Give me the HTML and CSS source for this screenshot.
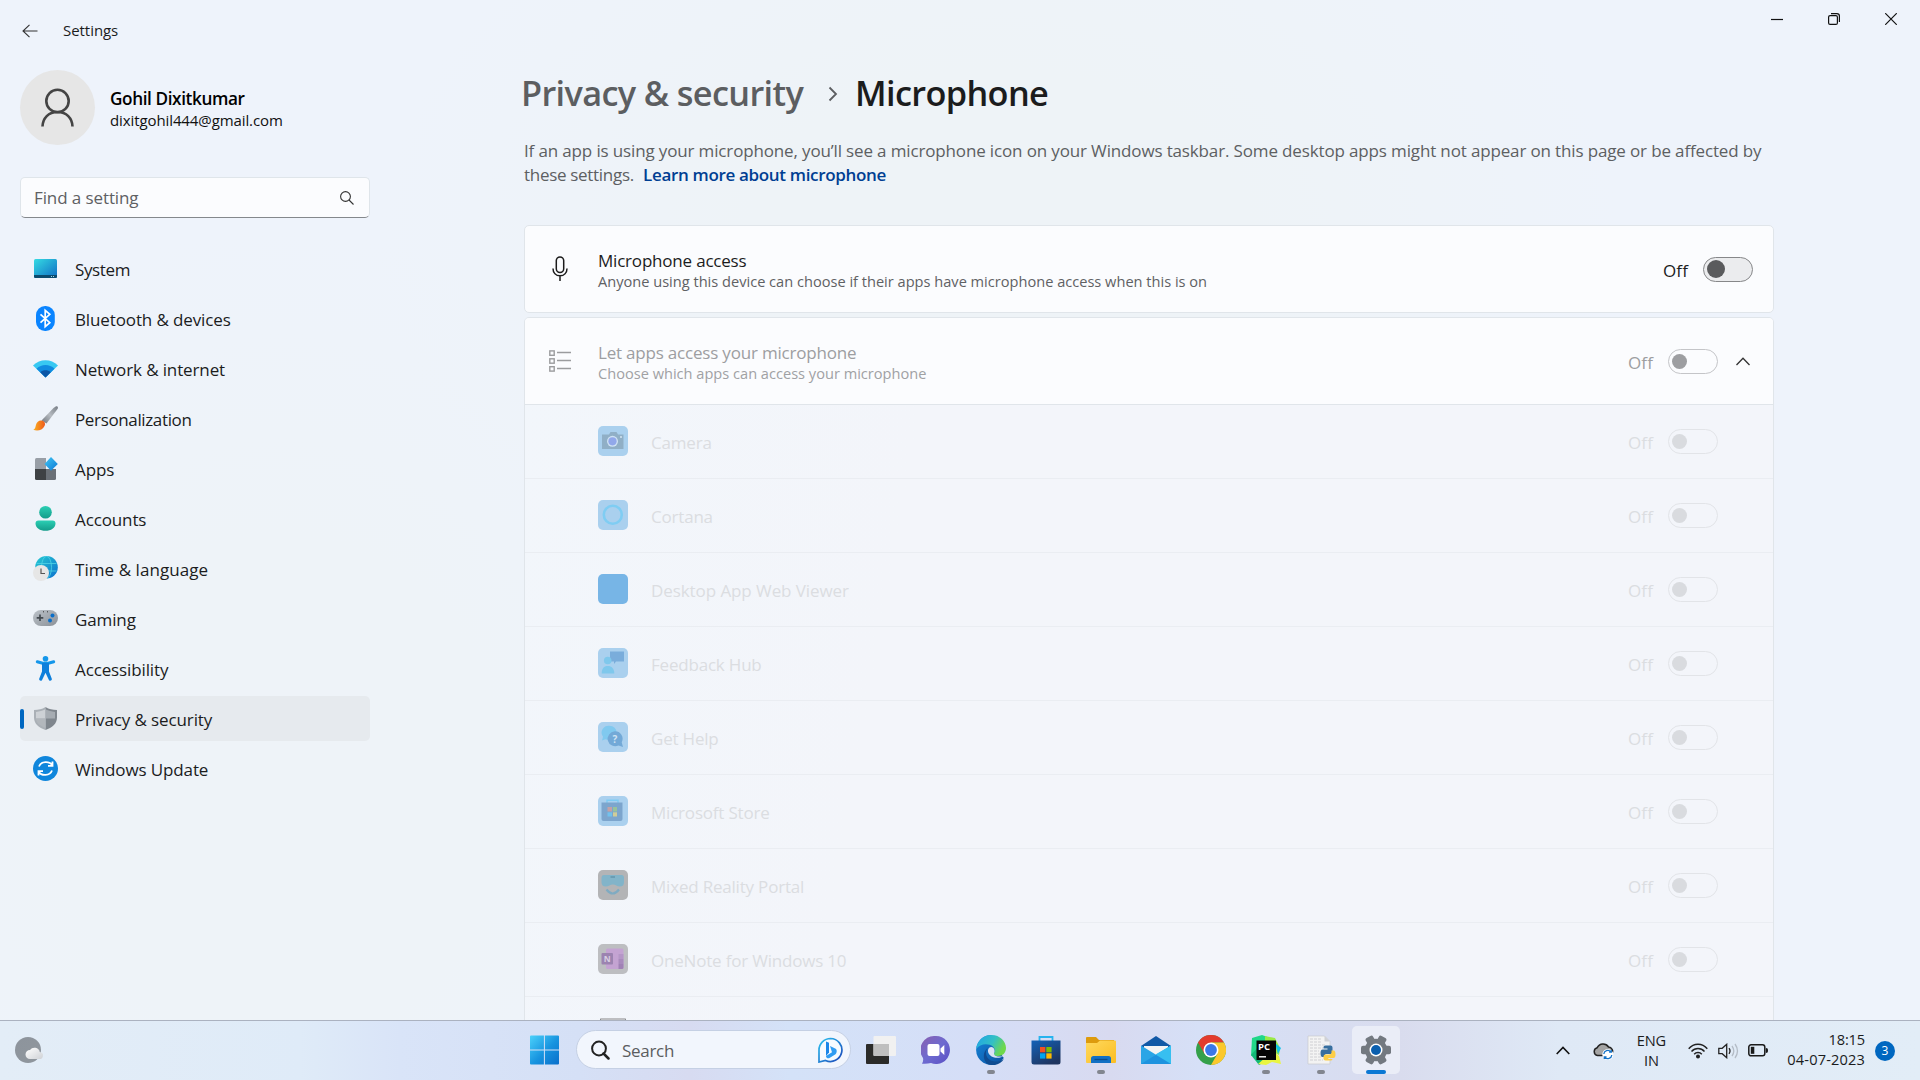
FILE: index.html
```html
<!DOCTYPE html>
<html lang="en">
<head>
<meta charset="utf-8">
<title>Settings</title>
<link rel="stylesheet" href="styles.css">
</head>
<body>
<div class="window">
  <header class="titlebar">
    <svg class="back" width="16" height="14" viewBox="0 0 16 14" fill="none" stroke="#333" stroke-width="1.1"><path d="M7.5 .8 1 7l6.500 6.200M1 7h14.500"/></svg>
    <span class="app-name">Settings</span>
    <div class="controls">
      <svg width="12" height="12" viewBox="0 0 12 12"><path d="M0 6.500h12" stroke="#111" stroke-width="1.200"/></svg>
      <svg width="12" height="12" viewBox="0 0 12 12" fill="none" stroke="#111" stroke-width="1.200"><rect x=".6" y="2.600" width="8.800" height="8.800" rx="1.500"/><path d="M3 .6h5.900a2.500 2.500 0 0 1 2.500 2.500V9"/></svg>
      <svg width="12" height="12" viewBox="0 0 12 12"><path d="M.2.2l11.600 11.600M11.800.2.2 11.800" stroke="#111" stroke-width="1.200"/></svg>
    </div>
  </header>
  <div class="body">
    <aside class="sidebar">
      <div class="profile">
        <div class="avatar"><svg width="34" height="40" viewBox="0 0 34 40" fill="none" stroke="#444" stroke-width="2.600"><circle cx="16.500" cy="13" r="11.200"/><path d="M1.500 38.500C1.800 30 7.500 24 16.500 24s14.700 6 15 14.500"/></svg></div>
        <div>
          <div class="name">Gohil Dixitkumar</div>
          <div class="mail">dixitgohil444@gmail.com</div>
        </div>
      </div>
      <div class="find"><span>Find a setting</span><svg width="14" height="14" viewBox="0 0 14 14" fill="none" stroke="#333" stroke-width="1.100"><circle cx="5.500" cy="5.500" r="4.900"/><path d="M9 9l4.500 4.500"/></svg></div>
      <nav class="nav">
        <a class="item tight"><svg viewBox="0 0 25 25"><defs><linearGradient id="sy" x2="1" y2="1"><stop stop-color="#35dbe3"/><stop offset="1" stop-color="#0f6cc4"/></linearGradient></defs><rect x="1" y="3" width="23" height="19" rx="1.500" fill="url(#sy)"/><path d="M1 19h23v1.500a1.500 1.500 0 0 1-1.500 1.500h-20A1.500 1.500 0 0 1 1 20.500z" fill="#0b4a6e"/><path d="M18 20.500h1M20 20.500h1" stroke="#9fd8e8"/></svg><span>System</span></a>
        <a class="item"><svg viewBox="0 0 25 25"><rect x="3" width="18.800" height="25" rx="9" fill="#0a84ff"/><path d="M7.500 8.300l9.300 8.400-4.600 4V4.300l4.600 4-9.300 8.400" fill="none" stroke="#fff" stroke-width="1.700"/></svg><span>Bluetooth &amp; devices</span></a>
        <a class="item"><svg viewBox="0 0 25 25"><path d="M12.500 21.500L0 9.500C7 2.500 18 2.500 25 9.500z" fill="#38c8f2"/><path d="M12.500 21.500L3.500 12.800c5-5 13-5 18 0z" fill="#118be0"/><path d="M12.500 21.500L7.300 16.300c3-2.600 7.400-2.600 10.400 0z" fill="#0b56a6"/></svg><span>Network &amp; internet</span></a>
        <a class="item tight"><svg viewBox="0 0 25 25"><defs><linearGradient id="br" x1="1" x2="0" y2="1"><stop stop-color="#777d85"/><stop offset=".5" stop-color="#b6bbc1"/><stop offset="1" stop-color="#6e737a"/></linearGradient><linearGradient id="bp" x2="1"><stop stop-color="#fbb021"/><stop offset="1" stop-color="#ee5a1c"/></linearGradient></defs><path d="M23 .3c1.500-.5 2.600 1 1.500 2.700L13.500 17.500 8.500 14.500 20.500 2z" fill="url(#br)"/><path d="M8 14.500c3 0 5 2.300 3.500 5.500C9.500 24.500 4 25.500.3 23.800c2-1 2-2.300 2.700-5 .7-2.700 2.600-4.300 5-4.300z" fill="url(#bp)"/></svg><span>Personalization</span></a>
        <a class="item"><svg viewBox="0 0 25 25"><defs><linearGradient id="ap" x2="1" y2="1"><stop stop-color="#41c7f5"/><stop offset="1" stop-color="#0b78d4"/></linearGradient></defs><path d="M3.500 2H13v11H2V3.500A1.500 1.500 0 0 1 3.500 2z" fill="#989ea6"/><path d="M2 13h11v11H3.500A1.500 1.500 0 0 1 2 22.500z" fill="#3e4144"/><path d="M13 13h10v9.500a1.500 1.500 0 0 1-1.500 1.500H13z" fill="#6a7077"/><path d="M18 1l6.800 7-6.800 6.800L11.500 8z" fill="url(#ap)"/></svg><span>Apps</span></a>
        <a class="item"><svg viewBox="0 0 25 25"><defs><linearGradient id="ac" y2="1" x2="0"><stop stop-color="#2bcfb4"/><stop offset="1" stop-color="#149c8a"/></linearGradient></defs><circle cx="12.500" cy="6.300" r="6.300" fill="url(#ac)"/><path d="M5.500 14.500h14a3 3 0 0 1 3 3c0 4.500-4.500 7.300-10 7.300s-10-2.800-10-7.300a3 3 0 0 1 3-3z" fill="url(#ac)"/></svg><span>Accounts</span></a>
        <a class="item loose"><svg viewBox="0 0 25 25"><defs><linearGradient id="gl" x2="1" y2="1"><stop stop-color="#25cbd3"/><stop offset="1" stop-color="#0d6fcd"/></linearGradient></defs><circle cx="13.500" cy="11.300" r="11.300" fill="url(#gl)"/><g fill="none" stroke="#4fd3e4" stroke-width=".8"><ellipse cx="13.500" cy="11.300" rx="5" ry="11"/><path d="M3.500 7.500h20M3.500 15h20"/></g><circle cx="8" cy="17" r="8" fill="#e6e6e6"/><path d="M8 12.500v5h4" fill="none" stroke="#555" stroke-width="1.200"/></svg><span>Time &amp; language</span></a>
        <a class="item"><svg viewBox="0 0 25 25"><defs><linearGradient id="ga" x2="1" y2="1"><stop stop-color="#bcc2c9"/><stop offset="1" stop-color="#8b9198"/></linearGradient></defs><rect y="4" width="25" height="16" rx="8" fill="url(#ga)"/><path d="M7 8.500v6.500M3.700 11.800h6.600" stroke="#444a50" stroke-width="1.700"/><circle cx="19.500" cy="9.500" r="2" fill="#0b6fc9"/><circle cx="17" cy="14.500" r="2" fill="#0b6fc9"/><path d="M10 5.800h1M14 5.800h1" stroke="#333"/></svg><span>Gaming</span></a>
        <a class="item"><svg viewBox="0 0 25 25"><circle cx="12.500" cy="2.800" r="2.800" fill="#1496ea"/><path d="M4.300 5.700l5.300 1.600h5.800l5.300-1.600" fill="none" stroke="#1496ea" stroke-width="3" stroke-linecap="round"/><path d="M9 7h7v8.500l2.800 7.300c.5 1.800-2 2.700-2.900 1.100l-3.400-7.100-3.400 7.100c-.9 1.600-3.400.7-2.900-1.100L9 15.500z" fill="#0e7fdb"/></svg><span>Accessibility</span></a>
        <a class="item selected"><svg viewBox="0 0 25 25"><path d="M12.500 1C9 3.300 5.500 4 1 4v7.500C1 18 6 21.500 12.500 24z" fill="#aab0b6"/><path d="M12.500 1C16 3.300 19.500 4 24 4v7.500C24 18 19 21.500 12.500 24z" fill="#7f868d"/><path d="M12.500 3.300C9.500 5 6.500 5.700 3 5.900v6.600h9.500z" fill="#cdd1d5"/><path d="M12.500 3.300C15.500 5 18.500 5.700 22 5.900v6.600h-9.500z" fill="#a6acb2"/><path d="M3 12.500h9.500V22C6.500 19.500 3.200 17 3 12.500z" fill="#b2b7bc"/></svg><span>Privacy &amp; security</span></a>
        <a class="item"><svg viewBox="0 0 25 25"><circle cx="12.500" cy="12.500" r="12.500" fill="#0f86dc"/><g fill="none" stroke="#fff" stroke-width="1.800"><path d="M6 10.500c2-5.500 10.500-6 13.500-1M19.500 5.500v4.300h-4.500M19 14.500c-2 5.500-10.500 6-13.500 1M5.500 19.500v-4.300H10"/></g></svg><span>Windows Update</span></a>
      </nav>
    </aside>
    <main class="main">
      <h1 class="crumbs"><span class="parent">Privacy &amp; security</span><svg width="10" height="16" viewBox="0 0 10 16" fill="none" stroke="#5c5e61" stroke-width="1.800"><path d="M1.500 1.500L8 8l-6.500 6.500"/></svg><span>Microphone</span></h1>
      <p class="intro"><span class="airy">If an app is using your microphone, you’ll see a microphone icon on your Windows taskbar. Some desktop apps might not appear on this page or be affected by</span><br><span class="wide">these settings.</span> <a class="link">Learn more about microphone</a></p>
      <section class="card">
        <svg class="lead" width="22" height="26" viewBox="0 0 22 26" fill="none" stroke="#1b1b1b" stroke-width="1.500"><rect x="7.300" y=".9" width="7.400" height="15.600" rx="3.700"/><path d="M4 12.500c0 4.500 3 7.300 7 7.300s7-2.800 7-7.300M11 20v5"/></svg>
        <div class="text"><div class="title">Microphone access</div><div class="sub">Anyone using this device can choose if their apps have microphone access when this is on</div></div>
        <span class="state">Off</span><span class="toggle enabled"></span>
      </section>
      <section class="group">
        <div class="card head">
          <svg class="lead" width="22" height="22" viewBox="0 0 22 22" fill="none" stroke="#9b9c9e" stroke-width="1.400"><rect x=".8" y=".9" width="4.400" height="4.400"/><rect x=".8" y="8.800" width="4.400" height="4.400"/><rect x=".8" y="16.700" width="4.400" height="4.400"/><path d="M8 2.500h14M8 10.500h14M8 18.500h14"/></svg>
          <div class="text"><div class="title">Let apps access your microphone</div><div class="sub">Choose which apps can access your microphone</div></div>
          <span class="state">Off</span><span class="toggle"></span>
          <svg class="chev" width="14" height="9" viewBox="0 0 14 9" fill="none" stroke="#333" stroke-width="1.300"><path d="M.5 8L7 1.200 13.500 8"/></svg>
        </div>
        <div class="row"><svg viewBox="0 0 30 30"><rect width="30" height="30" rx="5" fill="#aad0ee"/><path d="M4 8.500h7l1.500-2.500h6L20 8.500h5.500V23H4z" fill="#90afc6"/><circle cx="14.500" cy="15.300" r="5.500" fill="#cfe2f4"/><circle cx="14.500" cy="15.300" r="4.100" fill="#91a8ea"/><circle cx="23" cy="11" r="1" fill="#d3e4f0"/></svg><span class="app">Camera</span><span class="state">Off</span><span class="toggle"></span></div>
        <div class="row"><svg viewBox="0 0 30 30"><rect width="30" height="30" rx="5" fill="#aad0ee"/><circle cx="14.800" cy="14.800" r="9" fill="none" stroke="#7fcdf3" stroke-width="2.600"/></svg><span class="app">Cortana</span><span class="state">Off</span><span class="toggle"></span></div>
        <div class="row"><svg viewBox="0 0 30 30"><rect width="30" height="30" rx="5" fill="#77b5e6"/></svg><span class="app airy">Desktop App Web Viewer</span><span class="state">Off</span><span class="toggle"></span></div>
        <div class="row"><svg viewBox="0 0 30 30"><rect width="30" height="30" rx="5" fill="#aad0ee"/><path d="M12 3.500h14v10h-8l-2 2.500v-2.500h-4z" fill="#7aaddb"/><circle cx="9.700" cy="12.500" r="3.800" fill="#7fc8ec"/><path d="M3.700 25.500c0-5 2-7.500 6-7.500s6.600 2.500 6.600 7.500z" fill="#7fc8ec"/></svg><span class="app">Feedback Hub</span><span class="state">Off</span><span class="toggle"></span></div>
        <div class="row"><svg viewBox="0 0 30 30"><rect width="30" height="30" rx="5" fill="#aad0ee"/><path d="M11.500 3.700a7.200 7.200 0 0 1 0 14.400c-2 0-3-.8-4-.8L4 18.500l1-3.700a7 7 0 0 1 6.500-11.100z" fill="#80c9ef"/><path d="M16.700 9.300a7.500 7.500 0 0 1 7 11L25 25l-4.500-1.500a7.500 7.500 0 1 1-3.800-14.200z" fill="#73a9d7"/><text x="17" y="21" class="glyph-q">?</text></svg><span class="app">Get Help</span><span class="state">Off</span><span class="toggle"></span></div>
        <div class="row"><svg viewBox="0 0 30 30"><rect width="30" height="30" rx="5" fill="#aad0ee"/><path d="M9 7V4.300h11V7" fill="none" stroke="#7ecbf3" stroke-width="1.400"/><path d="M3.500 6.500h21V23a2 2 0 0 1-2 2h-17a2 2 0 0 1-2-2z" fill="#7ca5cd"/><path d="M9.500 11h4.500v4.500H9.500z" fill="#c4a1a6"/><path d="M15 11h4v4.500h-4z" fill="#98c39b"/><path d="M9.500 16.300h4.500v4.200H9.500z" fill="#72c1ed"/><path d="M15 16.300h4v4.200h-4z" fill="#d0cd98"/></svg><span class="app">Microsoft Store</span><span class="state">Off</span><span class="toggle"></span></div>
        <div class="row"><svg viewBox="0 0 30 30"><rect width="30" height="30" rx="5" fill="#b3b4b6"/><path d="M6 5h17.500Q26 5 26 8v4q0 4.500-4 4.500c-3 0-4.500-2-7.200-2s-4 2-7 2q-4.300 0-4.300-4.500V8q0-3 2.500-3z" fill="#82b4c9"/><path d="M12.500 7h4.500" stroke="#6296ad" stroke-width="1.500"/><path d="M8.500 19.500q6.200 8 12.500 0" fill="none" stroke="#7fabc2" stroke-width="2.200"/></svg><span class="app">Mixed Reality Portal</span><span class="state">Off</span><span class="toggle"></span></div>
        <div class="row"><svg viewBox="0 0 30 30"><rect width="30" height="30" rx="5" fill="#bdbec1"/><rect x="8" y="4.500" width="17.500" height="20.500" rx="1.500" fill="#c4a3d2"/><path d="M20.500 10h5v5h-5z" fill="#b596c7"/><path d="M20.500 15h5v5h-5z" fill="#a98abd"/><path d="M20.500 20h5v3.500a1.500 1.500 0 0 1-1.500 1.500h-3.500z" fill="#a081b5"/><rect x="3.500" y="9" width="11.500" height="11.500" rx="1" fill="#9c83b0"/><text x="9.200" y="17.600" class="glyph-n">N</text></svg><span class="app">OneNote for Windows 10</span><span class="state">Off</span><span class="toggle"></span></div>
        <div class="row"><svg viewBox="0 0 30 30"><rect x="2" width="26" height="30" rx="2" fill="#77797c"/><rect x="3" width="24" height="30" fill="#bdbec1"/></svg></div>
      </section>
    </main>
  </div>
</div>
<footer class="taskbar">
  <svg class="weather" width="30" height="28" viewBox="0 0 30 28"><defs><linearGradient id="mo" x2="1" y2="1"><stop stop-color="#8d949c"/><stop offset="1" stop-color="#8f969d"/></linearGradient><linearGradient id="cl" x2="1" y2="1"><stop stop-color="#fff"/><stop offset="1" stop-color="#cfd2d6"/></linearGradient></defs><circle cx="14" cy="14" r="13" fill="url(#mo)"/><path d="M16 23h9a3.500 3.500 0 0 0 .8-7 5.500 5.500 0 0 0-9.800-2 4.500 4.500 0 0 0 0 9z" fill="url(#cl)"/></svg>
  <div class="apps">
    <svg class="start" width="30" height="30" viewBox="0 0 30 30"><defs><linearGradient id="wi" gradientUnits="userSpaceOnUse" x1="0" y1="0" x2="29" y2="29"><stop stop-color="#4cd2fb"/><stop offset=".55" stop-color="#1793df"/><stop offset="1" stop-color="#0a70cb"/></linearGradient></defs><path d="M1 .5h12.900v13.900H0V1.500a1 1 0 0 1 1-1zM14.900.5h13.100a1 1 0 0 1 1 1v12.900H14.900zM0 15.400h13.900v14.100H1a1 1 0 0 1-1-1zM14.900 15.400H29v13.100a1 1 0 0 1-1 1H14.900z" fill="url(#wi)"/></svg>
    <div class="search">
      <svg width="19" height="20" viewBox="0 0 19 20" fill="none" stroke="#222" stroke-width="2"><circle cx="8" cy="8.500" r="6.900"/><path d="M12.500 13.500l5 5" stroke-width="2.500" stroke-linecap="round"/></svg>
      <span>Search</span>
      <svg class="bing" width="26" height="26" viewBox="0 0 26 26"><defs><linearGradient id="bi" x2="1" y2="1"><stop stop-color="#2bc3f0"/><stop offset="1" stop-color="#1a44b8"/></linearGradient></defs><path d="M13.500 1.500a11.500 11.500 0 1 1-5 21.900L2 25V13A11.500 11.500 0 0 1 13.500 1.500z" fill="#f6fbff" stroke="url(#bi)" stroke-width="1.700"/><path d="M9 4.500l3 1.300v9.700l-3 3.500z" fill="#1b86e8"/><path d="M13 9l5.700 2.800c1.500 1 1.300 4-.2 5.500L12.500 21c-1.500.8-3.500 0-3.500-2l6-3.700z" fill="#2f9cf2"/></svg>
    </div>
    <div class="task"><svg viewBox="0 0 30 30"><rect y="9" width="23" height="20" rx="1" fill="#2b2b29"/><rect x="7.500" y="1" width="22.500" height="20" rx="1" fill="#f1f1f1"/><path d="M7.500 9H23v12H8.500a1 1 0 0 1-1-1z" fill="#bfbfbf"/></svg></div>
    <div class="task"><svg viewBox="0 0 30 30"><defs><linearGradient id="ch" x1="0" y1="0" x2="1" y2="1"><stop stop-color="#8a5fae"/><stop offset=".5" stop-color="#6e6bd0"/><stop offset="1" stop-color="#5a4fc4"/></linearGradient></defs><path d="M15 1a14 14 0 1 1-5 27.100C7 29 4 28.800 1 28.800c1-2 1.500-3.500 1-5.800A14 14 0 0 1 15 1z" fill="url(#ch)"/><rect x="6.500" y="9" width="12" height="12" rx="2" fill="#fff"/><path d="M19.500 13.500l3.800-3.500v10l-3.800-3.500z" fill="#fff"/></svg></div>
    <div class="task"><svg viewBox="0 0 30 30"><defs><linearGradient id="e1" x2="1" y2=".4"><stop stop-color="#1fa4e8"/><stop offset=".6" stop-color="#33c0c4"/><stop offset="1" stop-color="#6fd84b"/></linearGradient><linearGradient id="e2" x2="1" y2="1"><stop stop-color="#1587da"/><stop offset="1" stop-color="#0c4f9f"/></linearGradient></defs><path d="M15 0A15 15 0 1 0 27.800 23L22 15 15 0z" fill="url(#e2)"/><path d="M.2 14C1 6 7 0 15.500 0 24 0 30 6.500 30 13c0 5-3.500 8-8 8-3.500 0-5-1.200-4-2.500 1.500-2 1-5-1-7C13 8 4 8 .2 14z" fill="url(#e1)"/><path d="M12 13c-4 4-2 12.500 6.500 13.500 4 .4 7.500-.8 9.500-2.500-3 5-9 7-14 5.800C7 28 5.500 17 12 13z" fill="#0f4c92"/><path d="M13.500 12.500c-3 2.500-1.500 8 4 9.800 4 1.200 8 .2 10.500-1.300-3.500 1-9.500.8-10-2-.2-1 1-1.500.5-4-.5-2.500-3-4-5-2.500z" fill="#dbe2f5"/></svg><i></i></div>
    <div class="task"><svg viewBox="0 0 30 30"><defs><linearGradient id="st" x2=".6" y2="1"><stop stop-color="#1362b8"/><stop offset="1" stop-color="#1f3560"/></linearGradient></defs><path d="M8.500 6V2h13v4" fill="none" stroke="#27b3ee" stroke-width="1.800"/><path d="M.5 5.500h29V27a2.500 2.500 0 0 1-2.500 2.500H3A2.500 2.500 0 0 1 .5 27z" fill="url(#st)"/><path d="M9 12h5.300v5.300H9z" fill="#f25022"/><path d="M15.300 12h5.300v5.300h-5.300z" fill="#7fba00"/><path d="M9 18.300h5.300v5.300H9z" fill="#00a4ef"/><path d="M15.300 18.300h5.300v5.300h-5.300z" fill="#ffb900"/></svg></div>
    <div class="task"><svg viewBox="0 0 30 30"><defs><linearGradient id="fo" x2="1" y2="1"><stop stop-color="#ffd95e"/><stop offset="1" stop-color="#fbbd22"/></linearGradient></defs><path d="M0 3a1 1 0 0 1 1-1h9l3 3h15v6H0z" fill="#dd9b0d"/><path d="M0 8h11l3-2.500h15a1 1 0 0 1 1 1V27a1 1 0 0 1-1 1H1a1 1 0 0 1-1-1z" fill="url(#fo)"/><path d="M5 28v-4.500A2.500 2.500 0 0 1 7.500 21h15a2.500 2.500 0 0 1 2.500 2.500V28z" fill="#1270c4"/><path d="M8.500 24.500h13" stroke="#0a4c8d" stroke-width="1.300"/></svg><i></i></div>
    <div class="task"><svg viewBox="0 0 30 30"><path d="M0 11L15 1l15 10v4H0z" fill="#1159a6"/><path d="M3 11h24v10H3z" fill="#f4f4f4"/><path d="M0 10.500L30 29H0z" fill="#2aa5e6"/><path d="M30 10.500V29H0z" fill="#1e93df"/><path d="M30 10.500V29L14.500 19.500z" fill="#37bff0"/></svg></div>
    <div class="task"><svg viewBox="0 0 30 30"><circle cx="15" cy="15" r="15" fill="#34a04a"/><path d="M2 7.500A15 15 0 0 1 28 7.500H15v7.500l-6.500 3.800z" fill="#e33b2e"/><path d="M28 7.500A15 15 0 0 1 15 30l6.500-11.300L15 7.500z" fill="#fbc82c"/><circle cx="15" cy="15" r="7.500" fill="#fff"/><circle cx="15" cy="15" r="5.900" fill="#3b78e7"/></svg></div>
    <div class="task"><svg viewBox="0 0 30 30"><path d="M1 3L11 0l8 3-9 12L0 21z" fill="#21d789"/><path d="M14 1l10 2 5 10-1 7-14-7z" fill="#9bea45"/><path d="M24 8l6 5-3 6z" fill="#12c3e8"/><path d="M0 20l8-9 8 15-8 4z" fill="#13b877"/><path d="M7 29l15-13 6 5 2 8-9-2-6 3z" fill="#e9f542"/><rect x="5.500" y="5.500" width="19.500" height="19.500" fill="#050505"/><text x="7" y="15.300" class="glyph-pc">PC</text><path d="M8 21.800h7" stroke="#fff" stroke-width="1.400"/></svg><i></i></div>
    <div class="task"><svg viewBox="0 0 30 30"><path d="M2 1h16.500L24 6.500V29H2z" fill="#f3f3f3" stroke="#c8cacf" stroke-width=".7"/><path d="M4 4h11M4 7h12M4 10h16M4 13h13M4 16h9M4 19h10M4 22h12M4 25h13" stroke="#cfd0d3" stroke-width="1.200" stroke-dasharray="3 1"/><path d="M18.500 1v5.500H24z" fill="#cfd1d5"/><path d="M19.500 10.500h5a2 2 0 0 1 2 2v4.500a2 2 0 0 1-2 2h-4a2 2 0 0 0-2 2v1h-2.500q-1.500-.5-1.500-4t2-3.500h5v-1h-4v-1.500q0-1.500 2-1.500z" fill="#386f9f"/><path d="M24.500 25.500h-5a2 2 0 0 1-2-2v-2a2 2 0 0 1 2-2h4a2 2 0 0 0 2-2v-2H28q1.500.5 1.500 4t-2 3.500h-5v1h4q0 1.500-2 1.500z" fill="#fdce46"/></svg><i></i></div>
    <div class="task active"><svg viewBox="0 0 30 30"><g fill="#737980"><circle cx="15" cy="15" r="11.200"/><rect y="10.800" width="30" height="8.400" rx="2"/><rect y="10.800" width="30" height="8.400" rx="2" transform="rotate(60 15 15)"/><rect y="10.800" width="30" height="8.400" rx="2" transform="rotate(120 15 15)"/></g><circle cx="15" cy="15" r="6.500" fill="#fff"/><circle cx="15" cy="15" r="5" fill="#0b5fae"/></svg><i></i></div>
  </div>
  <div class="tray">
    <svg class="up" width="14" height="9" viewBox="0 0 14 9" fill="none" stroke="#111" stroke-width="1.600"><path d="M.7 8L7 1.500 13.300 8"/></svg>
    <svg class="cloud" width="21" height="18" viewBox="0 0 21 18"><path d="M4.500 13.500a4 4 0 0 1-.3-7.800A6.500 6.500 0 0 1 15.500 5a4.300 4.300 0 0 1 3.500 6.500l-2 2z" fill="#a4a4a4" stroke="#222" stroke-width="1.500"/><circle cx="14.800" cy="12.500" r="5.500" fill="#fff"/><path d="M10.800 12a4 4 0 0 1 7-2.300M18.300 8v2.200h-2.200M18.800 13a4 4 0 0 1-7 2.300M11.300 17v-2.200h2.200" fill="none" stroke="#1473c8" stroke-width="1.300"/></svg>
    <div class="lang"><div>ENG</div><div>IN</div></div>
    <svg class="wifi" width="20" height="16" viewBox="0 0 20 16" fill="none" stroke="#222" stroke-width="1.400"><path d="M.7 5.800c5-6 13.600-6 18.600 0M3.500 8.500c3.500-4 9.500-4 13 0M6.200 11.200c2-2.300 5.600-2.300 7.600 0"/><circle cx="10" cy="13.500" r="1.300" fill="#222"/></svg>
    <svg class="vol" width="21" height="16" viewBox="0 0 21 16" fill="none" stroke="#222" stroke-width="1.300"><path d="M.8 5.300h3.400l4.500-4v13.400l-4.500-4H.8zM11 5.200q2 2.800 0 5.600"/><path d="M14 3q3.600 5 0 10M17 1q5 7 0 14" stroke="#b4bcc6"/></svg>
    <svg class="batt" width="20" height="13" viewBox="0 0 20 13"><rect x=".8" y=".8" width="16" height="11" rx="2.300" fill="none" stroke="#1b1b1b" stroke-width="1.500"/><rect x="2.800" y="2.800" width="3.500" height="7" fill="#1b1b1b"/><path d="M18 4.300q2 0 2 2.200t-2 2.200z" fill="#1b1b1b" stroke="#1b1b1b" stroke-width=".5"/></svg>
    <div class="clock"><div class="time">18:15</div><div class="date">04-07-2023</div></div>
    <span class="badge">3</span>
  </div>
</footer>
</body>
</html>
```
FILE: styles.css
```css
* { box-sizing: border-box; }
body {
  margin: 0;
  width: 1920px;
  height: 1080px;
  overflow: hidden;
  display: flex;
  flex-direction: column;
  font: 400 17px/22px "Open Sans", "Noto Sans", sans-serif;
  color: #1b1c1d;
}
svg { display: block; flex: none; }

.window {
  height: 1020px;
  display: flex;
  flex-direction: column;
  background:
    radial-gradient(ellipse 620px 420px at 1000px 240px, #eef3f7 40%, transparent),
    radial-gradient(ellipse 500px 560px at 280px 790px, #eef3f8 45%, transparent),
    linear-gradient(#eef3fb, #eef3fb);
}

.titlebar {
  height: 62px;
  flex: none;
  display: flex;
  align-items: center;
  padding: 0 23px 0 22px;
}
.app-name { margin-left: 25px; padding-bottom: 2px; font-size: 15px; letter-spacing: -.05px; }
.controls { margin-left: auto; align-self: flex-start; padding-top: 13px; display: flex; gap: 45px; }

.body { flex: 1; min-height: 0; display: flex; }

.sidebar { width: 350px; flex: none; margin-left: 20px; padding-top: 8px; }
.profile { display: flex; align-items: center; gap: 15px; }
.avatar {
  width: 75px;
  height: 75px;
  border-radius: 50%;
  background: #e6e6e6;
  display: flex;
  justify-content: center;
  align-items: center;
}
.name { font-size: 17.2px; font-weight: 600; line-height: 22px; letter-spacing: -.4px; color: #000; padding-top: 2px; }
.mail { font-size: 15px; line-height: 20px; letter-spacing: -.1px; color: #111; }

.find {
  margin-top: 32px;
  height: 41px;
  display: flex;
  align-items: center;
  justify-content: space-between;
  padding: 1px 15px 0 13px;
  border: 1px solid #dfe5ea;
  border-bottom-color: #84888c;
  border-radius: 5px;
  background: #fbfcfe;
  color: #5e6063;
  letter-spacing: -.1px;
}

.nav { margin-top: 28px; display: grid; gap: 5px; }
.item {
  position: relative;
  height: 45px;
  display: flex;
  align-items: center;
  gap: 17px;
  padding-left: 13px;
  border-radius: 5px;
  letter-spacing: -.12px;
}
.item svg { width: 25px; height: 25px; }
.item span { padding-top: 2px; }
.tight { letter-spacing: -.36px; }
.loose { letter-spacing: .06px; }
.selected { background: #e6eaee; }
.selected::before {
  content: "";
  position: absolute;
  left: 0;
  top: 13px;
  width: 4px;
  height: 20px;
  border-radius: 2px;
  background: #0067c0;
}

.main { width: 1253px; margin-left: 151px; padding: 8px 0 0 3px; overflow: hidden; display: flex; flex-direction: column; }
.main > * { flex: none; }
.crumbs {
  margin: 0 0 0 -3px;
  display: flex;
  align-items: center;
  font-size: 34.3px;
  font-weight: 600;
  line-height: 46px;
  letter-spacing: -.65px;
}
.crumbs .parent { color: #5c5e61; }
.crumbs svg { margin: 2px 17px 0 25px; }
.intro { margin: 23px 0 0; height: 48px; line-height: 24px; letter-spacing: -.3px; color: #5d5f62; white-space: nowrap; }
.intro .airy { letter-spacing: -.145px; }
.wide { margin-right: 5px; }
.link { font-weight: 600; letter-spacing: -.327px; color: #003e92; }

.card {
  margin-top: 38px;
  height: 88px;
  display: flex;
  align-items: center;
  padding: 0 20px 0 24px;
  border: 1px solid #e0e5ea;
  border-radius: 5px;
  background: #fbfcfe;
}
.text { flex: 1; margin-left: 27px; padding-top: 2px; }
.title { letter-spacing: -.2px; }
.sub { font-size: 14.6px; line-height: 19px; color: #5f6164; }
.state { letter-spacing: .1px; padding-top: 3px; margin-right: 15px; }
.toggle {
  width: 50px;
  height: 25px;
  border: 1px solid #c4c5c8;
  border-radius: 13px;
  display: flex;
  align-items: center;
  padding-left: 3px;
}
.toggle::before { content: ""; width: 15px; height: 15px; border-radius: 50%; background: #9d9ea1; }
.enabled { border-color: #868789; background: #ebecee; }
.enabled::before { width: 18px; height: 18px; background: #5a5b5d; }

.group {
  margin-top: 4px;
  border: 1px solid #e0e5ea;
  border-radius: 5px 5px 0 0;
  background: linear-gradient(100deg, #f2f6fb, #f3f5fa 30%, #f3f5fa);
}
.head {
  margin: 0;
  height: 87px;
  padding: 0 23px 0 24px;
  border-width: 0 0 1px;
  border-radius: 4px 4px 0 0;
  color: #9d9ea1;
}
.head .sub { color: #a0a1a4; }
.chev { margin-left: 18px; }

.row {
  height: 74px;
  display: flex;
  align-items: center;
  padding: 0 55px 0 73px;
  border-bottom: 1px solid #eaedf2;
  color: #dbdde1;
}
.row svg { width: 30px; height: 30px; margin-bottom: 1px; }
.row .app { flex: 1; margin-left: 23px; padding-top: 2px; letter-spacing: -.2px; }
.row .airy { letter-spacing: -.08px; }
.row .state { padding-top: 2px; }
.row .toggle { border-color: #e2e4e8; }
.row .toggle::before { background: #d9dbdf; }
.glyph-q { font: 700 10px "Open Sans", sans-serif; fill: #cfe3f3; text-anchor: middle; }
.glyph-n { font: 700 8.500px "Open Sans", sans-serif; fill: #d9cfe2; text-anchor: middle; }
.glyph-pc { font: 700 9.500px "Open Sans", sans-serif; fill: #fff; }

.taskbar {
  height: 60px;
  flex: none;
  display: grid;
  grid-template-columns: 516px 1fr auto;
  padding: 0 25px 0 14px;
  border-top: 1px solid #abb2c0;
  background: linear-gradient(90deg, #e3edf7 0, #dfebf8 300px, #d9e4f8 400px, #d5e0f6 580px, #d7dbf1 690px, #d4e2f8 790px, #d5def7 980px, #d8daf0 1110px, #d6e0f7 1200px, #d9dcee 1400px, #dfe9f6 1560px, #e2edf7 1920px);
}
.weather { margin-top: 15px; }
.apps { display: flex; gap: 25px; }
.start { margin-top: 14px; margin-right: -9px; }
.search {
  width: 275px;
  height: 39px;
  margin-top: 9px;
  margin-right: -10px;
  display: flex;
  align-items: center;
  padding: 0 7px 0 14px;
  border: 1px solid #c5d0e4;
  border-radius: 20px;
  background: #f2f6fd;
  color: #5b5d60;
  letter-spacing: -.3px;
}
.search span { flex: 1; margin-left: 12px; padding-top: 2px; }
.task { width: 30px; padding-top: 14px; display: flex; flex-direction: column; align-items: center; gap: 5px; }
.task svg { width: 30px; height: 30px; }
.task i { width: 8px; height: 4px; border-radius: 2px; background: #82868f; }
.active { width: 48px; height: 48px; margin: 5px -9px 0; padding-top: 9px; border-radius: 5px; background: #eaedf7; }
.active i { width: 20px; background: #0b78d4; }

.tray { display: flex; align-items: center; font-size: 14.6px; line-height: 20px; }
.cloud { margin-left: 23px; }
.lang { width: 36px; margin-left: 19px; text-align: center; padding-bottom: 2px; letter-spacing: -.24px; }
.wifi { margin: 0 10px 0 19px; }
.batt { margin-left: 9px; }
.clock { margin-left: 19px; padding-bottom: 3px; text-align: right; }
.time { letter-spacing: -.14px; }
.date { letter-spacing: .15px; }
.badge {
  width: 20px;
  height: 20px;
  margin-left: 10px;
  border-radius: 50%;
  background: #0067c0;
  color: #fff;
  font-size: 12px;
  text-align: center;
}
```
